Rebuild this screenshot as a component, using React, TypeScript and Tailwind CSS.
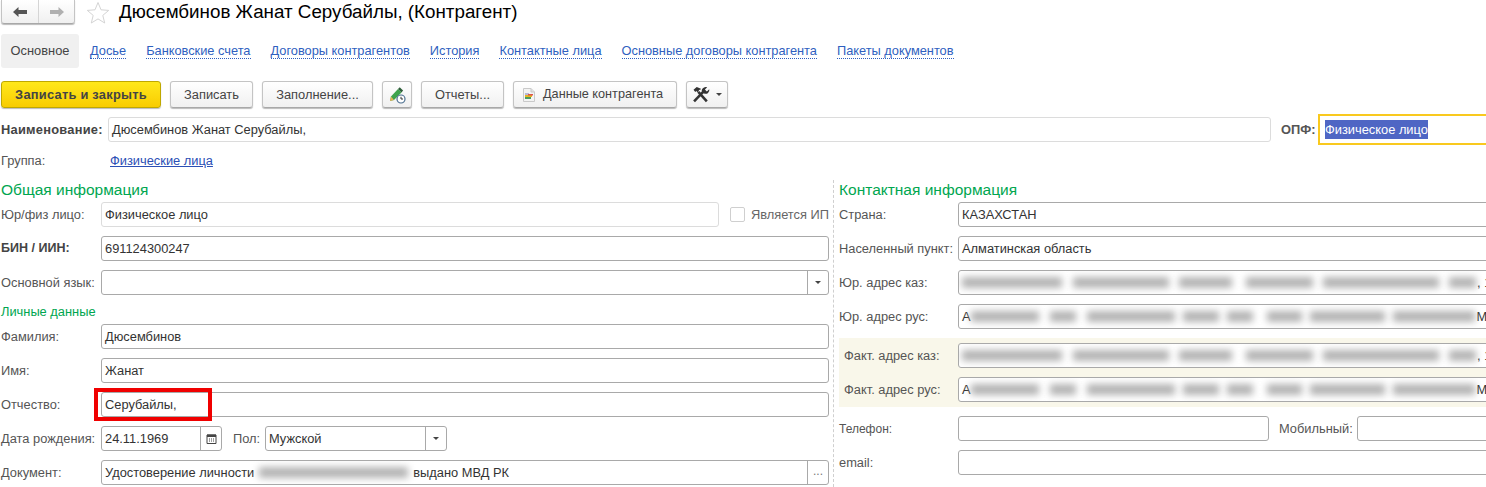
import type { ReactNode } from 'react';

const inputBase = 'h-[25px] rounded-[3px] border bg-white px-[3px] flex items-center min-w-0 overflow-hidden';

function Smudge({ className }: { className: string }) {
  return <span className={`h-[11px] shrink-0 bg-[#b4b4b4] blur-[3.5px] ${className}`} />;
}

function Input({
  className = '',
  light = false,
  children,
  suffix,
}: {
  className?: string;
  light?: boolean;
  children?: ReactNode;
  suffix?: ReactNode;
}) {
  return (
    <div className={`${inputBase} ${light ? 'border-[#dcdcdc]' : 'border-[#a9a9a9]'} ${className}`}>
      <div className="flex-1 min-w-0 flex items-center whitespace-nowrap text-[#333]">{children}</div>
      {suffix && <div className="-mr-[3px] h-full w-[21px] shrink-0 flex items-center justify-center border-l border-[#a9a9a9]">{suffix}</div>}
    </div>
  );
}

function Caret() {
  return <span className="block h-0 w-0 border-x-[3px] border-t-[3px] border-x-transparent border-t-[#444]" />;
}

function Row({ label, bold, children, labelWidth = 'w-[100px]', labelClass = '' }: { label: string; bold?: boolean; labelWidth?: string; labelClass?: string; children: ReactNode }) {
  return (
    <div className="flex items-center h-[25px]">
      <div className={`${labelWidth} shrink-0 whitespace-nowrap ${bold ? 'font-bold text-[12.5px] text-[#444]' : 'text-[#555]'} ${labelClass}`}>{label}</div>
      {children}
    </div>
  );
}

function ToolButton({ className, children }: { className: string; children: ReactNode }) {
  return (
    <button className={`h-[27px] rounded-[3px] border border-[#c4c4c4] border-b-[#a8a8a8] bg-gradient-to-b from-white to-[#f0f0f0] shadow-[0_1px_1px_#bbb] text-[#444] flex items-center ${className}`}>
      {children}
    </button>
  );
}

function PencilClock() {
  return (
    <svg width="17" height="18" viewBox="0 0 17 18">
      <path d="M1 15 2 10.500 9 3l3.500 3.500-7.500 7.500z" fill="#3fa34d" />
      <path d="M9 3l1.700-1.800 3.400 3.400L12.500 6.500z" fill="#2f5d3a" />
      <path d="M1 15 2 10.500 5 14z" fill="#e8b15a" />
      <circle cx="12" cy="13" r="4" fill="#fff" stroke="#4b6f8f" strokeWidth="1.200" />
      <path d="M12 10.800V13h2" fill="none" stroke="#333" strokeWidth="1" />
    </svg>
  );
}

function DocIcon() {
  return (
    <svg width="12" height="14" viewBox="0 0 12 14">
      <path d="M.5.5h7.500l3.500 3.500v9.500H.5z" fill="#f3f3f3" stroke="#c9c9c9" />
      <path d="M8 .5V4h3.500" fill="#e0e0e0" stroke="#c9c9c9" />
      <rect x="2" y="5" width="4" height="2" fill="#b8b8d8" />
      <rect x="2" y="7" width="7" height="2" fill="#e6b422" />
      <rect x="5" y="6" width="5" height="1.500" fill="#d9534f" />
      <rect x="2" y="9" width="6" height="2" fill="#4f9d5c" />
    </svg>
  );
}

function ToolsIcon() {
  return (
    <svg width="19" height="17" viewBox="0 0 17 16">
      <path d="M1.500 14.500 10.500 5" stroke="#333" strokeWidth="2.400" fill="none" />
      <path d="M9.500 6.500a3.400 3.400 0 0 1 1-4.800 3.600 3.600 0 0 1 3.400-.5l-2.200 2.100 1.800 1.900 2.300-2.200a3.500 3.500 0 0 1-4.800 4z" fill="#333" />
      <path d="M13.500 14.500 5.500 5.500" stroke="#333" strokeWidth="2.400" fill="none" />
      <path d="M1 3.500 4 1l4 1.500-.8 1.200-.8-.2L5 6 3.600 4.800 2.600 5.600z" fill="#333" />
    </svg>
  );
}

const tabs = ['Досье', 'Банковские счета', 'Договоры контрагентов', 'История', 'Контактные лица', 'Основные договоры контрагента', 'Пакеты документов'];

function AddressKaz() {
  return (
    <>
      <Smudge className="w-[100px]" />
      <Smudge className="ml-[11px] w-[96px]" />
      <Smudge className="ml-[10px] w-[53px]" />
      <Smudge className="ml-[14px] w-[67px]" />
      <Smudge className="ml-[10px] w-[116px]" />
      <Smudge className="ml-[10px] w-[27px]" />
      <span className="ml-[1px]">, 1</span>
    </>
  );
}

function AddressRus() {
  return (
    <>
      А
      <Smudge className="w-[68px]" />
      <Smudge className="ml-[11px] w-[26px]" />
      <Smudge className="ml-[11px] w-[88px]" />
      <Smudge className="ml-[8px] w-[36px]" />
      <Smudge className="ml-[8px] w-[26px]" />
      <Smudge className="ml-[14px] w-[35px]" />
      <Smudge className="ml-[8px] w-[75px]" />
      <Smudge className="ml-[8px] w-[82px]" />
      <span className="ml-[2px]">Му</span>
    </>
  );
}

export default function App() {
  return (
    <div className="w-[1486px] h-[487px] overflow-hidden bg-white text-[12.85px] font-['Liberation_Sans',Arial,sans-serif]">
      {/* Title */}
      <div className="flex items-center h-[24px] pl-[1px]">
        <div className="w-[74px] h-[24px] flex rounded-b-[3px] border border-t-0 border-[#c4c4c4] border-b-[#a8a8a8] bg-gradient-to-b from-white to-[#f0f0f0] shadow-[0_1px_1px_#bbb]">
          <div className="w-[37px] flex items-center justify-center border-r border-[#d5d5d5]">
            <svg width="14" height="10" viewBox="0 0 14 10"><path d="M0 5 5.500 0v3H14v4H5.500v3z" fill="#555" /></svg>
          </div>
          <div className="flex-1 flex items-center justify-center">
            <svg width="14" height="10" viewBox="0 0 14 10"><path d="M14 5 8.500 0v3H0v4h8.500v3z" fill="#b0b0b0" /></svg>
          </div>
        </div>
        <svg className="ml-[11px]" width="24" height="23" viewBox="0 0 24 23">
          <path d="M12 1.500l3 7.300 7.700.6-5.900 5 1.900 7.600L12 17.900 5.300 22l1.900-7.600-5.900-5 7.700-.6z" fill="#fff" stroke="#d4d4d4" strokeWidth="1" />
        </svg>
        <h1 className="ml-[9px] text-[18.8px] text-black whitespace-nowrap">Дюсембинов Жанат Серубайлы, (Контрагент)</h1>
      </div>

      {/* Tabs */}
      <div className="flex items-center h-[34px] mt-[10px] pl-[1px] gap-[20px]">
        <div className="h-full w-[78px] mr-[-9px] rounded-[3px] bg-[#f0f0f0] text-[#444] flex items-center justify-center">Основное</div>
        {tabs.map((tab) => (
          <a key={tab} className="text-[#2f5fc0] text-[12.8px] leading-[15px] border-b border-dotted border-[#2f5fc0] whitespace-nowrap">{tab}</a>
        ))}
      </div>

      {/* Toolbar */}
      <div className="flex items-center mt-[13px] pl-[1px] gap-[9px]">
        <button className="w-[160px] h-[27px] rounded-[3px] border border-[#bfa800] bg-gradient-to-b from-[#ffe81a] to-[#f8cc00] shadow-[0_1px_1px_#bbb] font-bold tracking-[0.25px] text-[#444]">Записать и закрыть</button>
        <ToolButton className="w-[83px] justify-center">Записать</ToolButton>
        <ToolButton className="w-[111px] justify-center">Заполнение...</ToolButton>
        <ToolButton className="w-[30px] justify-center"><PencilClock /></ToolButton>
        <ToolButton className="w-[83px] justify-center">Отчеты...</ToolButton>
        <ToolButton className="w-[164px] pl-[9px] gap-[8px] text-[12.7px] whitespace-nowrap"><DocIcon />Данные контрагента</ToolButton>
        <ToolButton className="w-[42px] justify-center gap-[5px]"><ToolsIcon /><Caret /></ToolButton>
      </div>

      {/* Name */}
      <div className="flex items-center h-[31px] mt-[6px] pl-[1px]">
        <span className="w-[107px] shrink-0 font-bold tracking-[0.25px] text-[#444] whitespace-nowrap">Наименование:</span>
        <Input light className="w-[1163px]">Дюсембинов Жанат Серубайлы,</Input>
        <span className="ml-[10px] w-[37px] font-bold text-[#555]">ОПФ:</span>
        <div className="h-[31px] flex-1 border-2 border-r-0 border-[#f9c91e] flex items-center pl-[5px] whitespace-nowrap">
          <span className="bg-[#4f66c4] text-white">Физическое лицо</span>
        </div>
      </div>

      {/* Group */}
      <div className="flex items-center h-[20px] mt-[6px] pl-[1px]">
        <span className="w-[109px] text-[#555]">Группа:</span>
        <a className="text-[#2b4fb5] underline">Физические лица</a>
      </div>

      {/* Columns */}
      <div className="flex mt-[9px] h-[307px]">
        <div className="w-[834px] shrink-0 pl-[1px] pr-[4px] border-r border-dashed border-[#cfcfcf]">
          <div className="h-[22px] pt-[1px] text-[15.5px] leading-[18px] text-[#00a650]">Общая информация</div>
          <div className="flex flex-col gap-[9px]">
            <Row label="Юр/физ лицо:">
              <Input light className="w-[618px]">Физическое лицо</Input>
              <span className="ml-[11px] size-[15px] rounded-[2px] border border-[#cfcfcf]" />
              <span className="ml-[6px] text-[#666] whitespace-nowrap">Является ИП</span>
            </Row>
            <Row label="БИН / ИИН:" bold>
              <Input className="flex-1">691124300247</Input>
            </Row>
            <Row label="Основной язык:">
              <Input className="flex-1" suffix={<Caret />} />
            </Row>
          </div>
          <div className="h-[29px] pt-[9px] leading-[16px] text-[#00a650]">Личные данные</div>
          <div className="flex flex-col gap-[9px]">
            <Row label="Фамилия:"><Input className="flex-1">Дюсембинов</Input></Row>
            <Row label="Имя:"><Input className="flex-1">Жанат</Input></Row>
            <div className="relative">
              <Row label="Отчество:"><Input className="flex-1">Серубайлы,</Input></Row>
              <div className="absolute left-[93px] -top-[4px] w-[118px] h-[33px] border-4 border-[#f00000] pointer-events-none" />
            </div>
            <Row label="Дата рождения:">
              <Input
                className="w-[121px]"
                suffix={
                  <svg width="11" height="11" viewBox="0 0 11 11">
                    <path d="M1 2h9v8.500H1z" fill="none" stroke="#444" />
                    <path d="M1 1.500h9V4H1z" fill="#444" />
                    <path d="M3 6h1M5 6h1M7 6h1M3 8h1M5 8h1M7 8h1" stroke="#444" />
                  </svg>
                }
              >
                24.11.1969
              </Input>
              <span className="ml-[11px] w-[32px] text-[#555]">Пол:</span>
              <Input className="w-[182px]" suffix={<Caret />}>Мужской</Input>
            </Row>
            <Row label="Документ:">
              <Input className="flex-1" suffix={<span className="text-[#777] text-[12px] leading-[10px] pb-[4px]">...</span>}>
                Удостоверение личности
                <Smudge className="ml-[5px] mr-[5px] w-[149px]" />
                выдано МВД РК
              </Input>
            </Row>
          </div>
        </div>

        <div className="flex-1 min-w-0 pl-[5px]">
          <div className="h-[22px] pt-[1px] text-[15.5px] leading-[18px] text-[#00a650]">Контактная информация</div>
          <div className="flex flex-col gap-[9px] -mr-[10px]">
            <Row label="Страна:" labelWidth="w-[119px]"><Input className="flex-1">КАЗАХСТАН</Input></Row>
            <Row label="Населенный пункт:" labelWidth="w-[119px]"><Input className="flex-1">Алматинская область</Input></Row>
            <Row label="Юр. адрес каз:" labelWidth="w-[119px]">
              <Input className="flex-1"><AddressKaz /></Input>
            </Row>
            <Row label="Юр. адрес рус:" labelWidth="w-[119px]">
              <Input className="flex-1"><AddressRus /></Input>
            </Row>
            <div className="flex flex-col gap-[9px] bg-[#f9f7ea] py-[5px] pl-[5px]">
              <Row label="Факт. адрес каз:" labelWidth="w-[114px]">
                <Input className="flex-1"><AddressKaz /></Input>
              </Row>
              <Row label="Факт. адрес рус:" labelWidth="w-[114px]">
                <Input className="flex-1"><AddressRus /></Input>
              </Row>
            </div>
            <Row label="Телефон:" labelWidth="w-[119px]" labelClass="text-[12px]">
              <Input className="w-[311px]" />
              <span className="ml-[10px] w-[78px] text-[#555]">Мобильный:</span>
              <Input className="flex-1" />
            </Row>
            <Row label="email:" labelWidth="w-[119px]"><Input className="flex-1" /></Row>
          </div>
        </div>
      </div>
    </div>
  );
}
